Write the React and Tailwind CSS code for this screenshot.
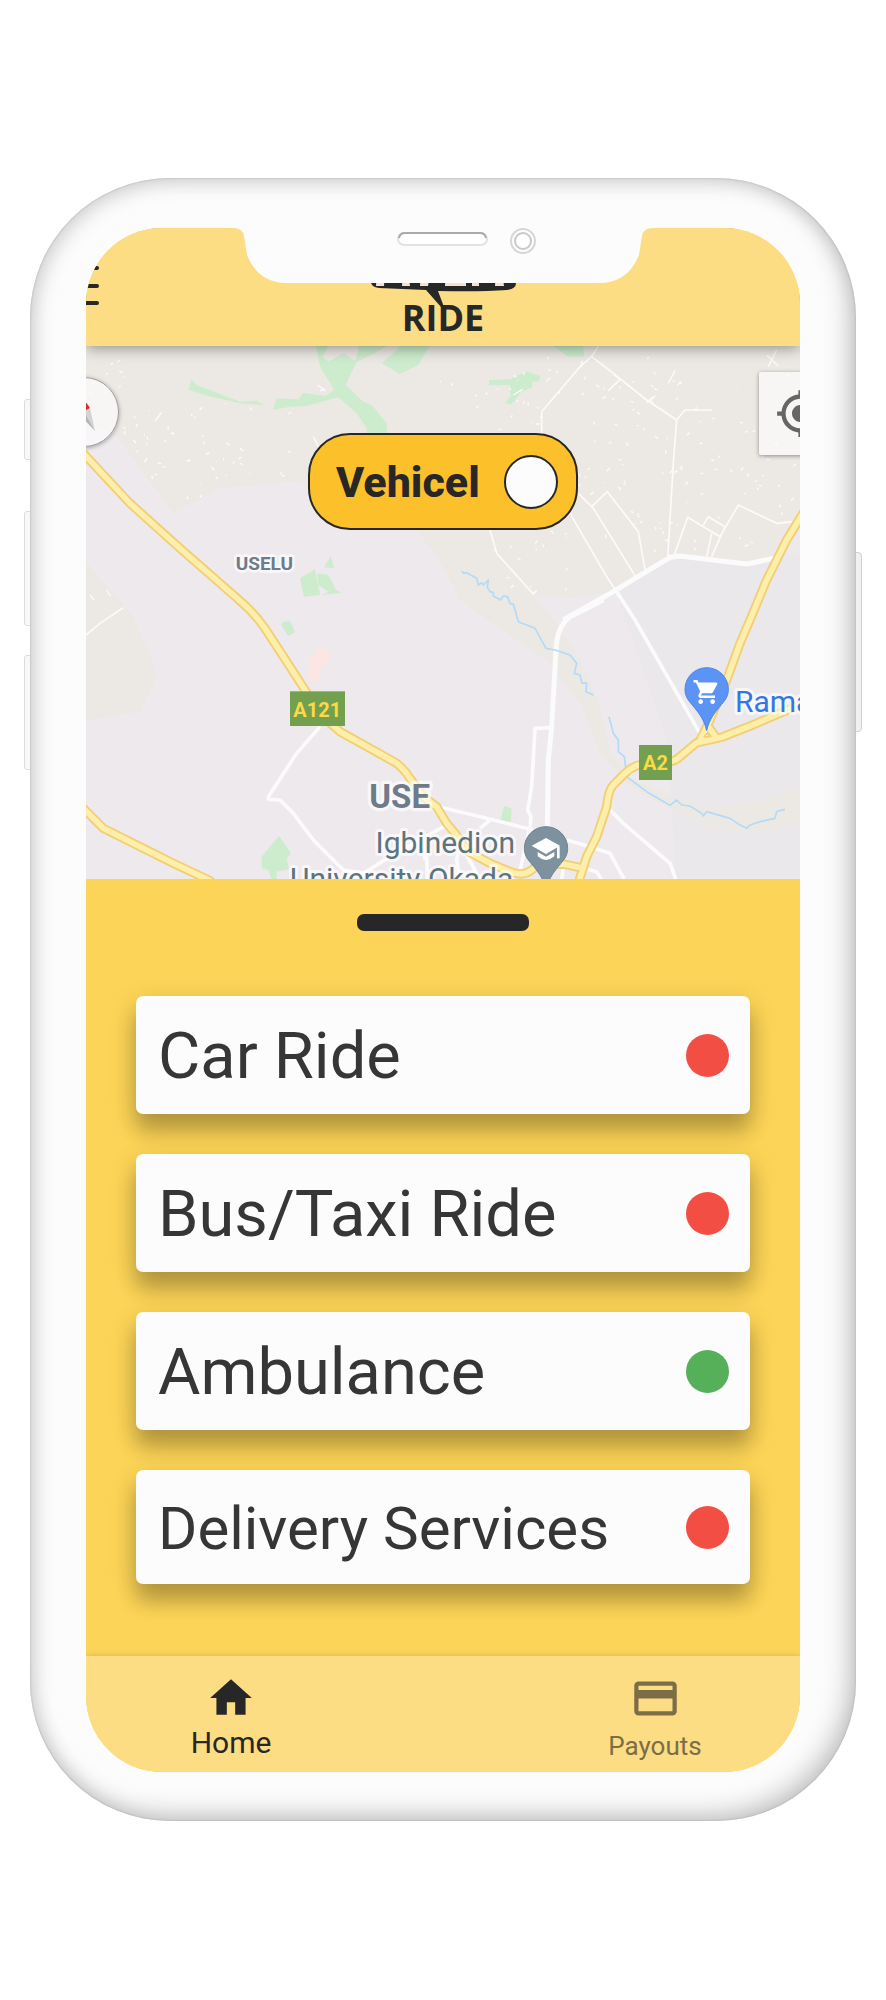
import React, { useState } from "react";
import { MdHome, MdCreditCard, MdMyLocation, MdShoppingCart } from "react-icons/md";

const services = [
  { name: "Car Ride", active: false },
  { name: "Bus/Taxi Ride", active: false },
  { name: "Ambulance", active: true },
  { name: "Delivery Services", active: false },
];

const BUILT_UP =
  "18,18 2160,18 2160,470 2150,470 2130,420 2150,380 2160,370 2160,560 2090,652 2000,672 1800,648 1770,650 1610,755 1480,772 1360,768 1430,850 1500,960 1560,1100 1590,1230 1640,1310 1780,1370 1880,1405 2030,1390 2160,1340 2160,1450 2030,1475 1880,1460 1740,1390 1640,1330 1560,1240 1500,1090 1400,960 1250,860 1140,780 1080,665 1010,570 690,420 420,445 280,520 110,290 18,240";

// Small building footprints, scattered the same way on every render.
function scatter(seed, count, x0, y0, x1, y1) {
  let s = seed;
  const rnd = () => {
    s = (s * 16807) % 2147483647;
    return s / 2147483647;
  };
  const parts = [];
  for (let i = 0; i < count; i++) {
    const x = Math.round(x0 + rnd() * (x1 - x0));
    const y = Math.round(y0 + rnd() * (y1 - y0));
    const dx = Math.round((rnd() - 0.5) * 20);
    const dy = Math.round((rnd() - 0.5) * 20);
    parts.push(`M${x} ${y}l${dx} ${dy}`);
  }
  return parts.join("");
}

const footprints =
  scatter(17, 65, 130, 190, 630, 490) +
  scatter(91, 12, 30, 60, 130, 160) +
  scatter(53, 150, 1250, 50, 2150, 650) +
  scatter(29, 14, 1280, 560, 1480, 750) +
  scatter(71, 6, 1080, 60, 1250, 250);

const whiteMinor = [
  "M1555 18L1535 50L1500 80L1385 215V290",
  "M1535 50L1600 100L1700 180L1790 240L1815 210L1895 210",
  "M1600 102L1620 118L1585 152M1700 188L1725 168M1505 62V82",
  "M1790 240L1780 370L1763 655",
  "M1470 520L1580 710L1610 755",
  "M1495 460L1540 505L1670 715",
  "M1535 500L1582 455L1675 575L1695 690",
  "M1230 570L1250 640L1360 762L1370 752",
  "M1783 645L1823 532L1920 590L1975 495L2090 550L2140 545",
  "M1870 555L1885 530L1935 560L1895 650M1880 650L1895 580",
  "M18 885L60 850L130 803",
];

const whiteMajor = [
  "M1450 840L1600 755L1690 700L1770 652L1800 648L2000 672L2095 652",
  "M1570 780L1470 830Q1430 860 1428 930L1415 1160L1405 1260L1402 1470",
];

const whiteMid = [
  "M1610 755L1665 840L1860 1180",
  "M1410 1163L1365 1165L1355 1340L1343 1410L1353 1430L1350 1460L1318 1600",
  "M1075 1400L1220 1435L1360 1470",
  "M1580 1400L1630 1450L1770 1570L1788 1620",
  "M1460 1500L1530 1520L1590 1540L1632 1617",
  "M1510 1585L1550 1595L1565 1620",
  "M1450 1580L1445 1620",
  "M720 1160L650 1240L565 1370V1378L600 1380L640 1420L700 1500L790 1590L850 1600L930 1550L1100 1455",
  "M1140 1510L1130 1560L1140 1620M1040 1530L1042 1617M1030 1500L1035 1560",
  "M1160 1545L1190 1600M1200 1465L1230 1440",
];

const yellowRoads = [
  "M10 340L150 490L300 625L475 778Q520 815 555 865L620 965L675 1050L720 1120Q750 1150 780 1175L870 1225L950 1270Q975 1290 990 1315L1030 1370L1070 1400L1100 1450L1125 1480L1165 1535L1230 1570L1290 1595Q1340 1615 1370 1575L1450 1572L1510 1585",
  "M1498 1620L1520 1550L1550 1490L1580 1400Q1585 1350 1600 1335L1635 1300Q1670 1265 1730 1270Q1780 1270 1800 1250L1850 1208Q1890 1200 1930 1190L2030 1150L2180 1085",
  "M2175 510L2120 600L2060 720L2010 840L1980 910L1940 1020L1890 1140L1858 1205",
  "M1882 1155L1910 1195",
  "M10 1405L70 1465L180 1520L280 1570L390 1622",
];

const parks = [
  "325,150 335,118 350,135 480,185 530,182 552,195 480,190 400,172",
  "708,18 745,18 728,50 745,65 790,40 825,62 835,30 835,18 920,18 885,40 830,65 797,135 850,185 875,195 920,250 922,290 860,290 860,265 830,220 775,172 680,198 630,200 580,210 590,175 655,178 670,158 735,168 763,150 720,80",
  "945,35 905,70 960,102 1015,75 1048,18 960,18",
  "660,715 705,688 720,765 672,770",
  "712,700 745,705 768,750 785,758 725,765 745,755 715,735",
  "752,648 763,685 733,682",
  "603,855 610,845 630,843 645,877 625,888",
  "597,1487 633,1540 620,1555 628,1588 590,1595 590,1618 575,1618 565,1590 545,1585 545,1550",
  "1420,18 1510,18 1512,50 1465,50",
  "1227,120 1290,118 1340,93 1380,108 1377,125 1355,125 1358,142 1325,155 1295,192 1275,190 1292,168 1290,135 1227,136",
  "1272,1398 1295,1405 1292,1448 1262,1440",
];

const PIN = "M0 124C-8 88 -26 68 -44 46C-58 30 -65 18 -65 0A65 65 0 0 1 65 0C65 18 58 30 44 46C26 68 8 88 0 124Z";

function MapArt() {
  return (
    <svg
      viewBox="18 18 2142 1599"
      preserveAspectRatio="xMidYMid slice"
      className="block h-full w-full"
      fill="none"
      strokeLinejoin="round"
      role="img"
      aria-label="Map of Uselu and Use"
      fontFamily="Roboto, sans-serif"
    >
      <defs>
        <clipPath id="built-up">
          <polygon points={BUILT_UP} />
        </clipPath>
      </defs>
      <rect x="18" y="18" width="2142" height="1599" fill="#ede9ed" />
      <polygon points="1610,755 1770,650 2160,640 2160,1617 1790,1617 1760,1200" fill="#eae8eb" />
      <polygon points={BUILT_UP} fill="#ece9e4" />
      <polygon points="18,665 160,830 232,1005 180,1115 18,1142" fill="#ece9e4" />
      {parks.map((p) => (
        <polygon key={p} points={p} fill="#cdeccd" />
      ))}
      <polygon points="722,917 757,945 715,1000 723,1015 705,1030 678,1018 690,1002 683,965" fill="#fbe6e4" />
      <g clipPath="url(#built-up)">
        <path d={footprints} stroke="#fbfbfb" strokeWidth="4" />
      </g>
      <path d="M700 290L720 330M712 135L735 150L720 152M30 765L42 780M80 750L92 768M1300 165L1328 148M225 243L246 217M1765 130L1785 92M2065 80L2090 30M2060 45L2095 78" stroke="#fbfbfb" strokeWidth="4" />
      <g stroke="#fbfbfb">
        <path d={whiteMinor.join("")} strokeWidth="5" />
        <path d={whiteMid.join("")} strokeWidth="11" />
        <path d={whiteMajor.join("")} strokeWidth="15" />
      </g>
      <path
        d="M1145 693L1152 700L1160 698L1190 715L1195 735L1205 728L1210 735L1225 720L1222 742L1230 755L1240 758L1240 768L1262 780L1270 768L1282 770L1290 790L1300 793L1315 845L1365 865L1398 925L1425 930L1470 945L1490 970L1483 1000L1500 1005L1505 1028L1520 1030L1518 1055L1540 1065M1587 1130L1600 1180L1615 1200L1615 1235L1633 1250L1640 1310L1700 1355L1770 1396L1790 1380L1805 1395L1830 1398L1865 1420L1870 1428L1880 1415L1950 1435L1980 1455L2000 1465L2010 1455L2040 1445L2085 1435L2090 1415L2115 1408"
        stroke="#b2dafa"
        strokeWidth="5"
      />
      <g strokeLinecap="round">
        <path d={yellowRoads.join("")} stroke="#f3ce72" strokeWidth="28" />
        <path d={yellowRoads.join("")} stroke="#fcefab" strokeWidth="17" />
      </g>
      <path d="M1872 1190L1880 1180L1890 1190Z" fill="#ffffff" stroke="#f3ce72" strokeWidth="4" />

      <rect x="630" y="1054" width="165" height="104" fill="#72a04f" />
      <rect x="1677" y="1215" width="99" height="105" fill="#72a04f" />
      <g fill="#fbd947" fontSize="60" fontWeight="700">
        <text x="640" y="1131">A121</text>
        <text x="1689" y="1290">A2</text>
      </g>

      <g stroke="#ffffff" strokeOpacity="0.65" paintOrder="stroke">
        <text x="467" y="690" fontSize="57" fontWeight="700" fill="#6e7b8b" strokeWidth="16">USELU</text>
        <text x="868" y="1404" fontSize="99" fontWeight="700" fill="#6e7b8b" strokeWidth="20">USE</text>
        <text x="1305" y="1540" textAnchor="end" fontSize="90" fill="#5c747f" strokeWidth="18">Igbinedion</text>
        <text x="1300" y="1648" textAnchor="end" fontSize="90" fill="#5c747f" strokeWidth="18">University Okada</text>
        <text x="1965" y="1117" fontSize="90" fill="#3277e6" strokeWidth="18">Rama</text>
      </g>

      <g transform="translate(1880 1048)">
        <path d={PIN} fill="#5b94f5" stroke="#4885ee" strokeWidth="3" />
      </g>
      <MdShoppingCart x="1837" y="1013" size={86} color="#ffffff" />
      <g transform="translate(1398 1525)">
        <path d={PIN} fill="#7d929e" stroke="#6d8390" strokeWidth="3" />
        <path d="M0 -31L42 -8L0 17L-43 -8Z" fill="#ffffff" />
        <path d="M-25 11V24Q0 46 25 24V11L0 25Z" fill="#ffffff" />
        <path d="M37 -6V30" stroke="#ffffff" strokeWidth="8" />
      </g>
    </svg>
  );
}

function Notch() {
  return (
    <svg
      viewBox="0 0 420 56"
      className="absolute -top-px left-1/2 z-20 h-14 w-[420px] -translate-x-1/2"
      fill="none"
      aria-hidden="true"
    >
      <path d="M0 0V1Q10 1 11 9L14 28Q20 43 31 50Q41 56 54 56H366Q379 56 389 50Q400 43 406 28L409 9Q410 1 420 1V0Z" fill="#fcfcfc" />
      <rect x="165" y="6" width="89" height="12" rx="6" fill="#ffffff" stroke="#e2e2e2" strokeWidth="2" />
      <path d="M166 11Q167 6 172 6H247Q252 6 253 11" stroke="#a9a9a9" strokeWidth="2" />
      <circle cx="290" cy="14" r="12" stroke="#d6d6d6" strokeWidth="2" />
      <circle cx="290" cy="14" r="8" fill="#ffffff" stroke="#c9c9c9" strokeWidth="2" />
    </svg>
  );
}

function Logo() {
  return (
    <svg viewBox="0 0 145 66" className="h-[66px] w-[145px]" role="img" aria-label="Ride logo">
      <path d="M0 0H145V13Q145 19 136 20Q110 22 67 21L73 37H70L55 20L8 18Q0 17 0 12Z" fill="#272727" />
      <path d="M6 0H14L13 16H5ZM32 0H37L39 16H31ZM50 0H60L57 16H49ZM75 0H95V16H74ZM101 0H108V16H101ZM125 0H131L133 16H124Z" fill="#fbe1cc" />
      <text x="72" y="61" textAnchor="middle" fontFamily="'Open Sans', sans-serif" fontWeight="700" fontSize="36" fill="#272727">
        RIDE
      </text>
    </svg>
  );
}

export default function App() {
  const [online, setOnline] = useState(true);
  return (
    <main className="min-h-screen bg-white px-[30px] pt-[178px] pb-[178px] font-[Roboto,sans-serif] text-[#272727]">
      <div className="relative mx-auto w-full max-w-[826px]">
        <div className="absolute top-[221px] -left-1.5 h-[61px] w-4 rounded-[3px] border border-[#dcdcdc] bg-[#f8f8f8]" />
        <div className="absolute top-[333px] -left-1.5 h-[115px] w-4 rounded-[3px] border border-[#dcdcdc] bg-[#f8f8f8]" />
        <div className="absolute top-[477px] -left-1.5 h-[115px] w-4 rounded-[3px] border border-[#dcdcdc] bg-[#f8f8f8]" />
        <div className="absolute top-[374px] -right-1.5 h-[180px] w-4 rounded-[4px] border border-[#d0d0d0] bg-[#f1f1f1]" />

        <div className="relative rounded-[140px] bg-[#fcfcfc] px-14 pt-[50px] pb-[49px] shadow-[inset_0_0_2px_#a8a8a8,inset_5px_5px_20px_rgba(0,0,0,0.14),inset_-8px_-8px_24px_rgba(0,0,0,0.2)]">
          <div className="relative">
            <Notch />
            <div className="flex flex-col overflow-hidden rounded-[76px] bg-[#fcd457]">
              <header className="relative z-10 grid h-[118px] grid-cols-3 bg-[#fcdd84] shadow-[0_2px_14px_rgba(0,0,0,0.4)]">
                <button type="button" aria-label="Open menu" className="-ml-6 mt-[38px] flex h-[39px] w-[37px] flex-col justify-between">
                  <span className="h-1 w-full rounded-full bg-[#272727]" />
                  <span className="h-1 w-full rounded-full bg-[#272727]" />
                  <span className="h-1 w-full rounded-full bg-[#272727]" />
                </button>
                <div className="mt-[42px] justify-self-center">
                  <Logo />
                </div>
              </header>

              <section aria-label="Map" className="relative h-[533px] overflow-hidden">
                <MapArt />
                <button
                  type="button"
                  aria-label="Reset north"
                  className="absolute top-[31px] -left-[37px] flex size-[70px] items-center justify-center rounded-full border border-[#9c9c9c] bg-white/60 shadow-[0_1px_4px_rgba(0,0,0,0.35)]"
                >
                  <svg viewBox="0 0 70 70" className="size-[70px] shrink-0" aria-hidden="true">
                    <path d="M34 21L41 31L36 34L29 36Z" fill="#dd2c2c" />
                    <path d="M29 36L36 34L46 54Z" fill="#b5b5b5" />
                    <path d="M41 31L46 54L35 35Z" fill="#d3d3d3" />
                  </svg>
                </button>
                <button
                  type="button"
                  aria-label="Show my location"
                  className="absolute top-[26px] -right-[42px] flex size-[83px] items-center justify-center rounded-xs bg-white/60 text-[#666666] shadow-[0_1px_4px_rgba(0,0,0,0.4)]"
                >
                  <MdMyLocation size={51} />
                </button>
                <label className="absolute top-[87px] left-1/2 flex h-[97px] w-[270px] -translate-x-1/2 cursor-pointer items-center justify-between rounded-[42px] border-2 border-[#272727] bg-[#fcc02b] pr-[18px] pl-[26px] text-[43px] font-extrabold">
                  <span className="pt-0.5">Vehicel</span>
                  <input
                    type="checkbox"
                    checked={online}
                    onChange={(e) => setOnline(e.target.checked)}
                    className="size-[54px] appearance-none rounded-full border-2 border-[#272727] bg-[#fcfcfc]"
                  />
                </label>
              </section>

              <section aria-label="Services" className="px-[50px] pt-[35px] pb-[72px]">
                <div className="mx-auto h-[17px] w-[172px] rounded-[7px] bg-[#272727]" />
                <ul className="mt-[65px] flex flex-col gap-10">
                  {services.map((s) => (
                    <li key={s.name}>
                      <button
                        type="button"
                        className={`flex w-full items-center justify-between rounded-[7px] bg-[#fcfcfc] pr-[21px] pl-[22px] text-left text-[#363636] shadow-[0_18px_20px_rgba(0,0,0,0.2),0_8px_28px_rgba(0,0,0,0.16)] ${
                          s.name.length > 14 ? "h-[114px] text-[60px]" : "h-[118px] text-[65px]"
                        }`}
                      >
                        <span className="pt-1">{s.name}</span>
                        <span className={`size-[43px] rounded-full ${s.active ? "bg-[#56af59]" : "bg-[#f34e43]"}`} />
                      </button>
                    </li>
                  ))}
                </ul>
              </section>

              <nav aria-label="Main" className="flex h-[116px] items-start justify-between bg-[#fcdd84] px-[97px] pt-[17px] shadow-[0_0_6px_rgba(0,0,0,0.15)]">
                <a href="#home" className="flex w-24 flex-col items-center text-[30px] leading-10">
                  <MdHome size={50} />
                  Home
                </a>
                <a href="#payouts" className="flex w-24 flex-col items-center text-[26px] leading-11 text-[#7b6e46]">
                  <MdCreditCard size={51} />
                  Payouts
                </a>
              </nav>
            </div>
          </div>
        </div>
      </div>
    </main>
  );
}
